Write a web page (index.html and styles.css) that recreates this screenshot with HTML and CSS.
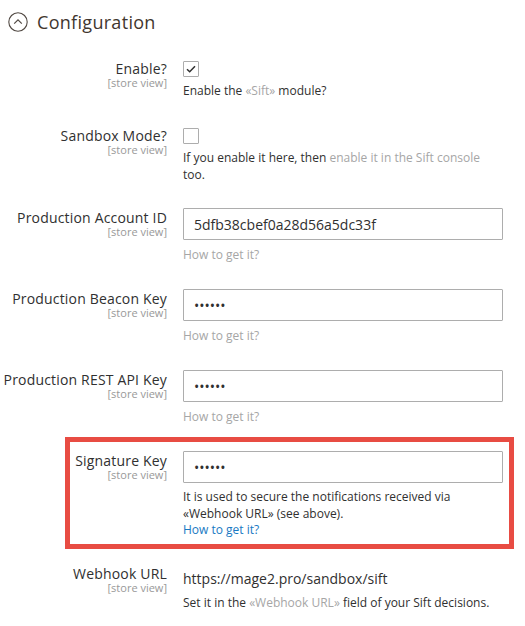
FILE: index.html
```html
<!DOCTYPE html>
<html>
<head>
<meta charset="utf-8">
<link rel="stylesheet" href="styles.css">
</head>
<body>
<div class="page">
  <div class="section-title">
    <svg class="toggle-icon" width="20" height="20" viewBox="0 0 20 20">
      <circle cx="10" cy="10" r="9.2" fill="none" stroke="#514943" stroke-width="1.1"/>
      <path d="M6.2 11.6 L10 7.8 L13.8 11.6" fill="none" stroke="#514943" stroke-width="1.2"/>
    </svg>
    <span class="title-text">Configuration</span>
  </div>

  <div class="field field-enable">
    <div class="label"><span class="label-text">Enable?</span><span class="scope">[store view]</span></div>
    <div class="control">
      <span class="checkbox checked">
        <svg width="12" height="10" viewBox="0 0 12 10"><path d="M2 5.2 L4.7 7.8 L10 2.2" fill="none" stroke="#303030" stroke-width="1.5"/></svg>
      </span>
      <div class="note">Enable the <span class="muted">«Sift»</span> module?</div>
    </div>
  </div>

  <div class="field field-sandbox">
    <div class="label"><span class="label-text">Sandbox Mode?</span><span class="scope">[store view]</span></div>
    <div class="control">
      <span class="checkbox"></span>
      <div class="note">If you enable it here, then <span class="muted">enable it in the Sift console</span> too.</div>
    </div>
  </div>

  <div class="field field-input field-first">
    <div class="label"><span class="label-text">Production Account ID</span><span class="scope">[store view]</span></div>
    <div class="control">
      <input class="input" type="text" value="5dfb38cbef0a28d56a5dc33f">
      <div class="note note-input"><span class="muted">How to get it?</span></div>
    </div>
  </div>

  <div class="field field-input">
    <div class="label"><span class="label-text">Production Beacon Key</span><span class="scope">[store view]</span></div>
    <div class="control">
      <input class="input" type="password" value="secret">
      <div class="note note-input"><span class="muted">How to get it?</span></div>
    </div>
  </div>

  <div class="field field-input">
    <div class="label"><span class="label-text">Production REST API Key</span><span class="scope">[store view]</span></div>
    <div class="control">
      <input class="input" type="password" value="secret">
      <div class="note note-input"><span class="muted">How to get it?</span></div>
    </div>
  </div>

  <div class="field field-highlight">
    <div class="label"><span class="label-text">Signature Key</span><span class="scope">[store view]</span></div>
    <div class="control">
      <input class="input" type="password" value="secret">
      <div class="note note-input note-tight">It is used to secure the notifications received via «Webhook URL» (see above).<br><a class="link" href="#">How to get it?</a></div>
    </div>
  </div>

  <div class="field field-webhook">
    <div class="label"><span class="label-text">Webhook URL</span><span class="scope">[store view]</span></div>
    <div class="control">
      <div class="url">https://mage2.pro/sandbox/sift</div>
      <div class="note note-url">Set it in the <span class="muted">«Webhook URL»</span> field of your Sift decisions.</div>
    </div>
  </div>
</div>
</body>
</html>
```

FILE: styles.css
```css
* { box-sizing: border-box; }
html, body { margin: 0; padding: 0; background: #fff; }
body {
  font-family: "Open Sans", "Noto Sans", sans-serif;
  color: #303030;
  width: 525px;
  height: 626px;
  overflow: hidden;
}
.page { padding-top: 12px; }

.section-title {
  display: flex;
  align-items: center;
  padding-left: 8px;
  height: 20px;
}
.toggle-icon { flex: none; }
.title-text {
  margin-left: 9px;
  font-size: 18px;
  letter-spacing: 0.3px;
  color: #41362f;
  line-height: 20px;
}

.field {
  display: grid;
  grid-template-columns: 167px 320px;
  column-gap: 16px;
}
.label {
  display: flex;
  flex-direction: column;
  align-items: flex-end;
  text-align: right;
  padding-top: 2px;
}
.label-text { font-size: 14px; line-height: 16px; color: #303030; letter-spacing: 0.18px; }
.scope { font-size: 11px; line-height: 12px; color: #999; }

.control { display: flex; flex-direction: column; align-items: flex-start; }

.field-enable { margin-top: 27px; }
.field-sandbox { margin-top: 27px; }
.field-input { margin-top: 26px; }
.field-input.field-first { margin-top: 25px; }

.checkbox {
  width: 16px;
  height: 16px;
  margin-top: 2px;
  border: 1px solid #adadad;
  border-radius: 1px;
  display: flex;
  align-items: center;
  justify-content: center;
  background: #fff;
}

.note {
  font-size: 12px;
  line-height: 17px;
  margin-top: 5px;
  color: #303030;
}
.muted { color: #a6a6a6; }
.note-input { margin-top: 6px; }
.note-tight { line-height: 16.5px; }
.link { color: #1979c3; text-decoration: none; }

.input {
  width: 320px;
  height: 32px;
  border: 1px solid #adadad;
  border-radius: 1px;
  padding: 0 10px;
  font-family: "Open Sans", sans-serif;
  font-size: 14px;
  color: #303030;
  background: #fff;
  outline: none;
}

.field-highlight {
  margin-top: 12px;
  margin-left: 65px;
  width: 449px;
  border: 5px solid #e84c43;
  padding: 9px 0 5px 0;
  grid-template-columns: 97px 320px;
}

.field-webhook { margin-top: 15px; }
.url { font-size: 14px; line-height: 20px; margin-top: 5px; color: #303030; }
.note-url { margin-top: 5px; }
```
